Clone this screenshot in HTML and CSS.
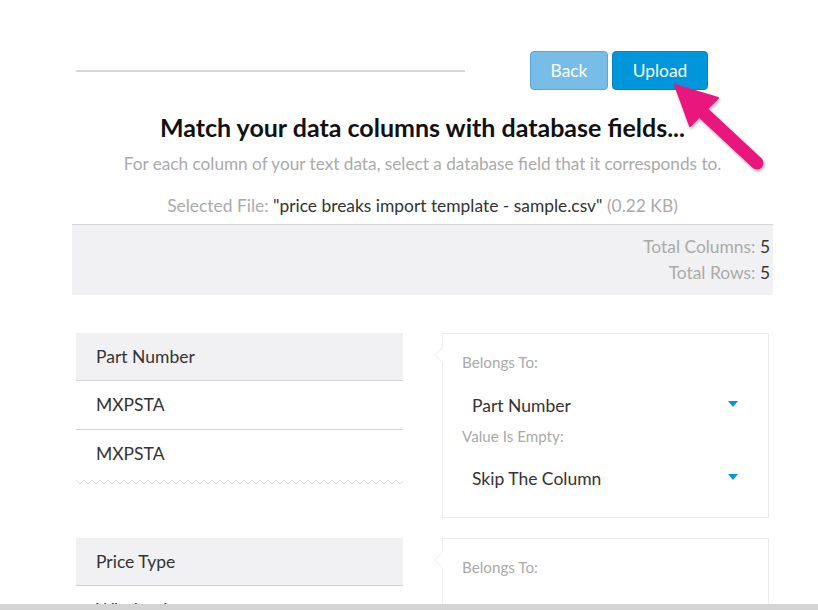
FILE: index.html
```html
<!DOCTYPE html>
<html>
<head>
<meta charset="utf-8">
<link rel="stylesheet" href="styles.css">
</head>
<body>
<div class="page">
  <div class="topbar">
    <div class="progress-line"></div>
    <div class="actions">
      <button class="btn btn-back">Back</button>
      <button class="btn btn-upload">Upload</button>
    </div>
  </div>
  <h1 class="title">Match your data columns with database fields...</h1>
  <p class="subtitle">For each column of your text data, select a database field that it corresponds to.</p>
  <p class="file">Selected File: <span class="dark">"price breaks import template - sample.csv"</span> (0.22 KB)</p>
  <div class="summary">
    <div>Total Columns: <span class="dark">5</span></div>
    <div>Total Rows: <span class="dark">5</span></div>
  </div>

  <div class="mapping">
    <div class="col-data">
      <div class="col-head">Part Number</div>
      <div class="col-row">MXPSTA</div>
      <div class="col-row last">MXPSTA</div>
      <svg class="zigzag" width="327" height="8" viewBox="0 0 327 8">
        <defs>
          <pattern id="zz" width="8" height="8" patternUnits="userSpaceOnUse">
            <polyline points="0,2 4,6 8,2" fill="none" stroke="#dcdcdc" stroke-width="1"/>
          </pattern>
        </defs>
        <rect width="327" height="8" fill="url(#zz)"/>
      </svg>
    </div>
    <div class="col-config">
      <div class="label">Belongs To:</div>
      <div class="select"><span>Part Number</span><i class="caret"></i></div>
      <div class="label second">Value Is Empty:</div>
      <div class="select select2"><span>Skip The Column</span><i class="caret"></i></div>
    </div>
  </div>

  <div class="mapping mapping2">
    <div class="col-data">
      <div class="col-head">Price Type</div>
      <div class="col-row">Wholesale</div>
    </div>
    <div class="col-config">
      <div class="label">Belongs To:</div>
      <div class="select"><span>Price Type</span><i class="caret"></i></div>
    </div>
  </div>
</div>

<svg class="pointer" width="120" height="110" viewBox="0 0 120 110">
  <defs>
    <filter id="sh" x="-20%" y="-20%" width="140%" height="140%">
      <feDropShadow dx="1" dy="2" stdDeviation="1.5" flood-color="#000" flood-opacity="0.3"/>
    </filter>
  </defs>
  <g filter="url(#sh)" fill="#e8157d" stroke="#e8157d">
    <line x1="38" y1="38" x2="97" y2="93" stroke-width="13" stroke-linecap="round"/>
    <polygon points="15,15 58,28 30,56" stroke-width="2" stroke-linejoin="round"/>
  </g>
</svg>

<div class="hscroll"></div>
</body>
</html>
```

FILE: styles.css
```css
html, body {
  margin: 0;
  padding: 0;
  background: #fff;
  overflow: hidden;
  height: 610px;
}
body {
  font-family: Lato, "Open Sans", Arial, sans-serif;
  color: #333;
}
.page {
  width: 701px;
  margin-left: 72px;
}
.topbar {
  display: flex;
  align-items: center;
  padding-top: 51px;
  padding-left: 4px;
}
.progress-line {
  width: 389px;
  height: 2px;
  background: #d6d6d6;
  margin-right: 65px;
}
.actions {
  display: flex;
  gap: 4px;
}
.btn {
  font-family: Lato, Arial, sans-serif;
  font-size: 17.4px;
  color: #fff;
  height: 39px;
  border-radius: 4px;
  padding: 0;
  cursor: pointer;
}
.btn-back {
  width: 78px;
  background: #78bde8;
  border: 1px solid #5aa6d8;
}
.btn-upload {
  width: 96px;
  background: #0096db;
  border: 1px solid #0c82c2;
}
.title {
  margin: 21px 0 0;
  font-size: 25px;
  font-weight: 700;
  line-height: 32px;
  text-align: center;
  color: #111;
}
.subtitle {
  margin: 9px 0 0;
  font-size: 17.2px;
  line-height: 24px;
  text-align: center;
  color: #aaa;
}
.file {
  margin: 18px 0 0;
  font-size: 17.4px;
  line-height: 24px;
  text-align: center;
  color: #aaa;
}
.dark {
  color: #333;
}
.summary {
  margin-top: 6px;
  border-top: 1px solid #d6d6d6;
  background: #f1f1f3;
  padding: 9px 3px 0 0;
  box-sizing: border-box;
  height: 71px;
  text-align: right;
  font-size: 17.4px;
  line-height: 26px;
  color: #aaa;
}
.mapping {
  display: flex;
  gap: 39px;
  margin-top: 38px;
  padding-left: 4px;
}
.mapping2 {
  margin-top: 20px;
}
.col-data {
  width: 327px;
}
.col-head {
  height: 47px;
  line-height: 47px;
  background: #f1f1f3;
  border-bottom: 1px solid #cfcfcf;
  padding-left: 20px;
  font-size: 17.5px;
}
.col-row {
  height: 48px;
  line-height: 48px;
  border-bottom: 1px solid #d6d6d6;
  padding-left: 20px;
  font-size: 17.5px;
}
.col-row.last {
  border-bottom: none;
}
.zigzag {
  display: block;
}
.col-config {
  position: relative;
  width: 327px;
  box-sizing: border-box;
  border: 1px solid #ececec;
  padding: 18px 20px 19px 19px;
  align-self: flex-start;
}
.col-config::before {
  content: "";
  position: absolute;
  left: -9px;
  top: 12px;
  width: 0;
  height: 0;
  border-top: 9px solid transparent;
  border-bottom: 9px solid transparent;
  border-right: 9px solid #f4f4f4;
}
.col-config::after {
  content: "";
  position: absolute;
  left: -7px;
  top: 13px;
  width: 0;
  height: 0;
  border-top: 8px solid transparent;
  border-bottom: 8px solid transparent;
  border-right: 8px solid #fff;
}
.label {
  font-size: 15.2px;
  line-height: 20px;
  color: #aaa;
}
.label.second {
  margin-top: 1px;
}
.select {
  display: flex;
  align-items: center;
  justify-content: space-between;
  height: 40px;
  margin-top: 13px;
  padding: 0 10px 0 10px;
  font-size: 17.5px;
  color: #333;
}
.select2 {
  margin-top: 12px;
}
.caret {
  display: block;
  width: 0;
  height: 0;
  border-left: 5px solid transparent;
  border-right: 5px solid transparent;
  border-top: 6px solid #0096db;
  margin-right: 0;
  margin-top: -2px;
}
.pointer {
  position: absolute;
  left: 660px;
  top: 70px;
}
.hscroll {
  position: fixed;
  left: 0;
  right: 0;
  bottom: 0;
  height: 6px;
  background: #d4d4d4;
}
```
